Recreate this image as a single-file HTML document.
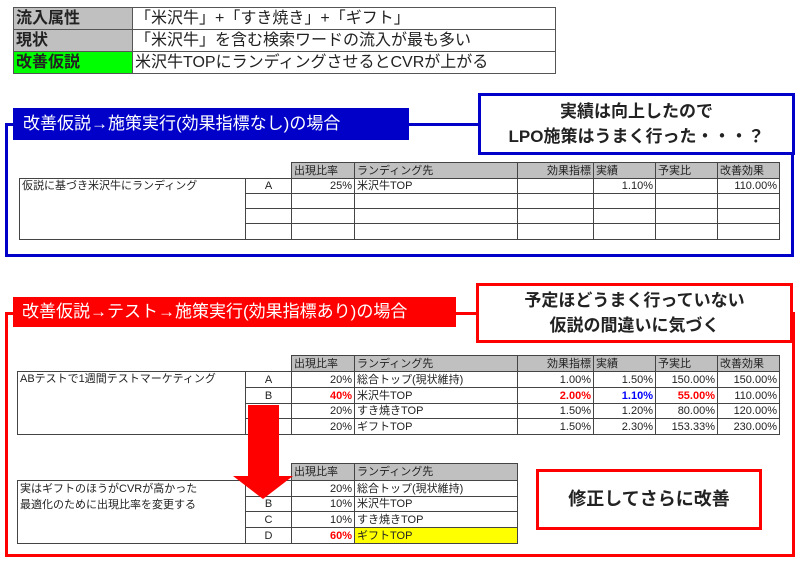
<!DOCTYPE html>
<html><head><meta charset="utf-8"><style>
*{margin:0;padding:0;box-sizing:border-box}
body{width:800px;height:567px;background:#fff;position:relative;overflow:hidden;font-family:"Liberation Sans","Noto Sans CJK JP",sans-serif;color:#222}
.a{position:absolute}
table{border-collapse:collapse;table-layout:fixed;position:absolute;font-size:11px}
td{border:1px solid #444;padding:0 2px;white-space:nowrap;overflow:hidden;line-height:14px}
td.n{border:none}
td.h{background:#c0c0c0}
.r{text-align:right}.c{text-align:center}
.red{color:#f00;font-weight:bold}.blu{color:#00f;font-weight:bold}
.top td{font-size:16px;height:22px;line-height:20px;border:1px solid #555}
.cl{background:#fff;font-weight:bold;font-size:17px;text-align:center;line-height:25px;display:flex;align-items:center;justify-content:center}
</style></head><body>
<table class="top" style="left:13px;top:7px;width:543px">
<colgroup><col style="width:119px"><col></colgroup>
<tr><td style="background:#c0c0c0;font-weight:bold">流入属性</td><td>「米沢牛」+「すき焼き」+「ギフト」</td></tr>
<tr><td style="background:#c0c0c0;font-weight:bold">現状</td><td>「米沢牛」を含む検索ワードの流入が最も多い</td></tr>
<tr><td style="background:#00ff00;font-weight:bold">改善仮説</td><td>米沢牛TOPにランディングさせるとCVRが上がる</td></tr>
</table>

<div class="a" style="left:5px;top:123px;width:789px;height:134px;border:3px solid #0000c8"></div>
<div class="a" style="left:13px;top:108px;width:396px;height:32px;background:#0000c8;color:#fff;font-size:17px;line-height:32px;padding-left:10px">改善仮説→施策実行(効果指標なし)の場合</div>
<div class="a cl" style="left:478px;top:93px;width:317px;height:62px;border:3px solid #0000c8">実績は向上したので<br>LPO施策はうまく行った・・・？</div>

<table style="left:19px;top:162px;width:760px">
<colgroup><col style="width:226px"><col style="width:46px"><col style="width:63px"><col style="width:163px"><col style="width:76px"><col style="width:62px"><col style="width:62px"><col style="width:62px"></colgroup>
<tr style="height:16px"><td class="n"></td><td class="n"></td><td class="h">出現比率</td><td class="h">ランディング先</td><td class="h r">効果指標</td><td class="h">実績</td><td class="h">予実比</td><td class="h">改善効果</td></tr>
<tr style="height:15px"><td rowspan="4" style="vertical-align:top">仮説に基づき米沢牛にランディング</td><td class="c">A</td><td class="r">25%</td><td>米沢牛TOP</td><td></td><td class="r">1.10%</td><td></td><td class="r">110.00%</td></tr>
<tr style="height:15px"><td></td><td></td><td></td><td></td><td></td><td></td><td></td></tr>
<tr style="height:15px"><td></td><td></td><td></td><td></td><td></td><td></td><td></td></tr>
<tr style="height:16px"><td></td><td></td><td></td><td></td><td></td><td></td><td></td></tr>
</table>

<div class="a" style="left:5px;top:312px;width:790px;height:245px;border:3px solid #f00"></div>
<div class="a" style="left:13px;top:297px;width:443px;height:30px;background:#f00;color:#fff;font-size:17px;line-height:30px;padding-left:9px">改善仮説→テスト→施策実行(効果指標あり)の場合</div>
<div class="a cl" style="left:476px;top:283px;width:317px;height:60px;border:3px solid #f00">予定ほどうまく行っていない<br>仮説の間違いに気づく</div>

<table style="left:17px;top:355px;width:762px">
<colgroup><col style="width:228px"><col style="width:46px"><col style="width:63px"><col style="width:163px"><col style="width:76px"><col style="width:62px"><col style="width:62px"><col style="width:62px"></colgroup>
<tr style="height:16px"><td class="n"></td><td class="n"></td><td class="h">出現比率</td><td class="h">ランディング先</td><td class="h r">効果指標</td><td class="h">実績</td><td class="h">予実比</td><td class="h">改善効果</td></tr>
<tr style="height:16px"><td rowspan="4" style="vertical-align:top">ABテストで1週間テストマーケティング</td><td class="c">A</td><td class="r">20%</td><td>総合トップ(現状維持)</td><td class="r">1.00%</td><td class="r">1.50%</td><td class="r">150.00%</td><td class="r">150.00%</td></tr>
<tr style="height:16px"><td class="c">B</td><td class="r red">40%</td><td>米沢牛TOP</td><td class="r red">2.00%</td><td class="r blu">1.10%</td><td class="r red">55.00%</td><td class="r">110.00%</td></tr>
<tr style="height:15px"><td class="c">C</td><td class="r">20%</td><td>すき焼きTOP</td><td class="r">1.50%</td><td class="r">1.20%</td><td class="r">80.00%</td><td class="r">120.00%</td></tr>
<tr style="height:16px"><td class="c">D</td><td class="r">20%</td><td>ギフトTOP</td><td class="r">1.50%</td><td class="r">2.30%</td><td class="r">153.33%</td><td class="r">230.00%</td></tr>
</table>

<table style="left:17px;top:463px;width:500px">
<colgroup><col style="width:228px"><col style="width:46px"><col style="width:63px"><col style="width:163px"></colgroup>
<tr style="height:17px"><td class="n"></td><td class="n"></td><td class="h">出現比率</td><td class="h">ランディング先</td></tr>
<tr style="height:16px"><td rowspan="4" style="vertical-align:top;line-height:16px">実はギフトのほうがCVRが高かった<br>最適化のために出現比率を変更する</td><td class="c">A</td><td class="r">20%</td><td>総合トップ(現状維持)</td></tr>
<tr style="height:15px"><td class="c">B</td><td class="r">10%</td><td>米沢牛TOP</td></tr>
<tr style="height:16px"><td class="c">C</td><td class="r">10%</td><td>すき焼きTOP</td></tr>
<tr style="height:16px"><td class="c">D</td><td class="r red">60%</td><td style="background:#ff0">ギフトTOP</td></tr>
</table>

<svg class="a" style="left:0;top:0" width="800" height="567"><polygon points="248,405 279,405 279,476 293,476 263,499 233,476 248,476" fill="#f00"/></svg>

<div class="a cl" style="left:536px;top:469px;width:226px;height:61px;border:3px solid #f00;font-size:18px">修正してさらに改善</div>
</body></html>
